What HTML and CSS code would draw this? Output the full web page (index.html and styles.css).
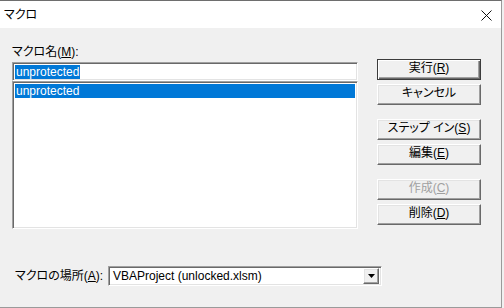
FILE: index.html
```html
<!DOCTYPE html>
<html lang="ja">
<head>
<meta charset="utf-8">
<title>マクロ</title>
<link rel="stylesheet" href="styles.css">
</head>
<body>
<div class="window">
  <div class="titlebar">
    <span class="title">マクロ</span>
    <svg class="close" width="11" height="11" viewBox="0 0 11 11"><path d="M0.5 0.5 L10.5 10.5 M10.5 0.5 L0.5 10.5" stroke="#111" stroke-width="1" fill="none"/></svg>
  </div>
  <div class="content">
    <div class="top">
      <div class="left">
        <div class="label">マクロ名(<u>M</u>):</div>
        <div class="field sunken"><span class="sel">unprotected</span></div>
        <div class="list sunken"><div class="row selected">unprotected</div></div>
      </div>
      <div class="buttons">
        <div class="btn default">実行(<u>R</u>)</div>
        <div class="btn near">キャンセル</div>
        <div class="btn far">ステップ イン(<u>S</u>)</div>
        <div class="btn near">編集(<u>E</u>)</div>
        <div class="btn far disabled">作成(<u>C</u>)</div>
        <div class="btn near">削除(<u>D</u>)</div>
      </div>
    </div>
    <div class="bottom">
      <span class="label place">マクロの場所(<u>A</u>):</span>
      <div class="combo sunken">
        <span class="value">VBAProject (unlocked.xlsm)</span>
        <span class="drop"><svg width="7" height="4" viewBox="0 0 7 4"><path d="M0 0 H7 L3.5 4 Z" fill="#000"/></svg></span>
      </div>
    </div>
  </div>
</div>
</body>
</html>
```
FILE: styles.css
```css
html, body {
  margin: 0;
  padding: 0;
  background: #f0f0f0;
}
body {
  font-family: "Liberation Sans", "Noto Sans CJK JP", sans-serif;
  font-size: 12px;
  font-feature-settings: "palt";
  color: #000;
}
.window {
  width: 501px;
  height: 306px;
  border-top: 1px solid #6e6e6e;
  border-right: 1px solid #9a9a9a;
  border-bottom: 1px solid #9a9a9a;
  background: #f0f0f0;
  display: flex;
  flex-direction: column;
}
.titlebar {
  height: 27px;
  background: #fff;
  display: flex;
  align-items: center;
  justify-content: space-between;
  padding: 0 9px 0 4px;
}
.title {
  font-size: 12px;
  line-height: 14px;
  margin-top: 1px;
}
.close {
  display: block;
  margin-top: 1px;
}
.content {
  padding-left: 12px;
}
.top {
  display: flex;
  gap: 19px;
}
.left {
  width: 346px;
  display: flex;
  flex-direction: column;
}
.label {
  line-height: 14px;
  margin-top: 17px;
  height: 14px;
}
.sunken {
  box-sizing: border-box;
  background: #fff;
  border-style: solid;
  border-width: 1px;
  border-color: #a0a0a0 #fff #fff #a0a0a0;
  box-shadow: inset 1px 1px 0 #696969, inset -1px -1px 0 #e3e3e3;
}
.field {
  margin-top: 3px;
  height: 19px;
  padding: 2px 0 0 2px;
}
.sel {
  display: inline-block;
  background: #0078d7;
  color: #fff;
  line-height: 14px;
  height: 14px;
  padding: 0 1px;
}
.list {
  height: 148px;
  padding: 2px 2px 0 2px;
}
.row {
  line-height: 14px;
  height: 14px;
  padding-left: 1px;
}
.row.selected {
  background: #0078d7;
  color: #fff;
}
.buttons {
  width: 104px;
  display: flex;
  flex-direction: column;
  padding-top: 31px;
}
.btn {
  box-sizing: border-box;
  height: 21px;
  line-height: 17px;
  text-align: center;
  background: #f0f0f0;
  border: 1px solid;
  border-color: #fff #696969 #696969 #fff;
  box-shadow: inset -1px -1px 0 #a0a0a0, inset 1px 1px 0 #e3e3e3;
  white-space: nowrap;
}
.btn.default {
  border: 1px solid #3c3c3c;
  box-shadow: inset 1px 1px 0 #fff, inset -1px -1px 0 #696969, inset -2px -2px 0 #a0a0a0;
}
.btn.near {
  margin-top: 4px;
}
.btn.far {
  margin-top: 14px;
}
.btn.disabled {
  color: #a0a0a0;
}
.bottom {
  display: flex;
  align-items: center;
  margin-top: 37px;
  padding-left: 3px;
}
.place {
  margin-top: 0;
  width: 93px;
}
.combo {
  width: 274px;
  height: 20px;
  display: flex;
  align-items: center;
  justify-content: space-between;
  padding: 2px 2px 2px 4px;
}
.value {
  line-height: 14px;
}
.drop {
  box-sizing: border-box;
  width: 16px;
  height: 16px;
  background: #f0f0f0;
  border: 1px solid;
  border-color: #fff #696969 #696969 #fff;
  box-shadow: inset -1px -1px 0 #a0a0a0, inset 1px 1px 0 #e3e3e3;
  display: flex;
  align-items: center;
  justify-content: center;
}
.drop svg {
  display: block;
}
```
